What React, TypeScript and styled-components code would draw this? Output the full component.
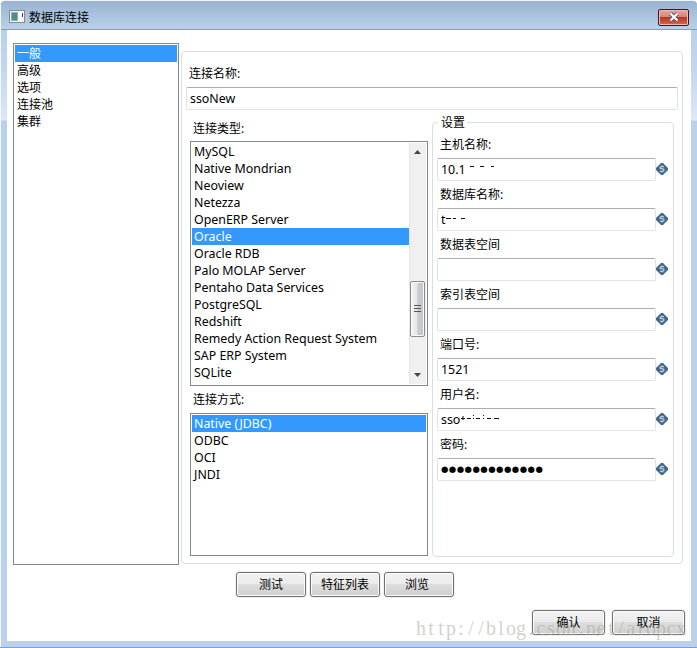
import React from "react";
import styled, { createGlobalStyle, css } from "styled-components";

const Global = createGlobalStyle`
  html, body { margin: 0; padding: 0; background: #fff; overflow: hidden; }
  *, *::before, *::after { box-sizing: border-box; }
  body, button, input {
    font-family: "Noto Sans", "Noto Sans CJK SC", sans-serif;
    font-size: 12px;
    color: #000;
  }
`;

const Window = styled.div`
  position: relative;
  width: 697px;
  height: 648px;
  padding: 0 6px 6px 7px;
  display: flex;
  flex-direction: column;
  background: linear-gradient(#99b4d1 0, #b9d1ea 30px, #c3d7ee 70px, #dce9f7 119px, #b9d1ea 120px);
  border-top: 1px solid #eef3f8;
  border-bottom: 1px solid #2cc8e0;
  border-radius: 5px 5px 0 0;
  box-shadow: inset 1px 0 #f4f8fc;
`;

const TitleBar = styled.header`
  height: 29px;
  flex: none;
  margin: 0 -6px 0 -6px;
  padding: 0 8px 0 8px;
  display: flex;
  align-items: center;
  background: linear-gradient(#99b4d1, #b9d1ea);
  border-bottom: 1px solid #9199a6;
  border-radius: 4px 4px 0 0;
`;

const Title = styled.h1`
  margin: 6px auto 0 4px;
  font: inherit;
  line-height: 18px;
`;

const AppIcon = styled.svg`
  width: 16px;
  height: 14px;
  margin-top: 4px;
`;

const CloseButton = styled.button`
  width: 31px;
  height: 17px;
  margin-top: 4px;
  padding: 0;
  display: grid;
  place-items: center;
  border: 1px solid #431422;
  border-radius: 2px;
  background: linear-gradient(#e6a79d 0, #d98578 45%, #b93621 50%, #d46a57 100%);
  box-shadow: inset 0 0 0 1px #f0b8ae;
`;

const Content = styled.main`
  flex: 1;
  min-height: 0;
  padding: 13px 6px 0;
  display: flex;
  flex-direction: column;
  background: #fff;
`;

const Columns = styled.div`
  display: flex;
  height: 522px;
  flex: none;
`;

const listFrame = css`
  border: 1px solid #828790;
  background: #fff;
  padding: 1px;
`;

const Categories = styled.ul`
  ${listFrame}
  width: 166px;
  height: 522px;
  margin: 0 2px 0 0;
  list-style: none;
`;

const Row = styled.li<{ $selected?: boolean }>`
  height: 17px;
  padding-left: 2px;
  line-height: 18px;
  overflow: hidden;
  white-space: nowrap;
  color: ${(p) => (p.$selected ? "#fff" : "#000")};
  background: ${(p) => (p.$selected ? "#3399ff" : "transparent")};
`;

const Panel = styled.section`
  width: 502px;
  height: 513px;
  margin-top: 8px;
  padding: 13px 4px 0 4px;
  border: 1px solid #d5dfe5;
  border-radius: 4px;
`;

const Label = styled.label`
  display: block;
  height: 18px;
  line-height: 18px;
  padding-left: 3px;
  white-space: nowrap;
`;

const Input = styled.input`
  display: block;
  width: 100%;
  height: 23px;
  padding: 0 3px 1px;
  border: 1px solid #e2e3ea;
  border-top-color: #abadb3;
  border-radius: 2px;
  background: #fff;
  font-size: 12.4px;
  outline: none;
`;

const NameInput = styled(Input)`
  margin-top: 4px;
`;

const Split = styled.div`
  display: flex;
  justify-content: space-between;
  padding: 9px 4px 0;
`;

const TypeColumn = styled.div`
  width: 238px;
  display: flex;
  flex-direction: column;
`;

const ListLabel = styled(Label)<{ $above: number; $below: number }>`
  flex: none;
  margin: ${(p) => p.$above}px 0 ${(p) => p.$below}px;
`;

const ListBox = styled.div<{ $height: number }>`
  ${listFrame}
  height: ${(p) => p.$height}px;
  flex: none;
  display: flex;
  overflow: hidden;
`;

const Rows = styled.ul`
  flex: 1;
  margin: 0;
  padding: 0;
  list-style: none;
  font-size: 12.4px;
`;

const ScrollBar = styled.div`
  width: 17px;
  padding: 7px 1px 7px 0;
  display: flex;
  flex-direction: column;
  align-items: center;
  background: #f0f0f0;
  border-left: 1px solid #e6e6e6;
`;

const Arrow = styled.svg`
  width: 7px;
  height: 4px;
  flex: none;
`;

const Thumb = styled.div`
  width: 15px;
  height: 56px;
  flex: none;
  margin: 127px 0 auto;
  display: grid;
  place-items: center;
  border: 1px solid #8b8b8b;
  border-radius: 2px;
  background: linear-gradient(90deg, #f5f5f5, #e5e5e8 45%, #c9cacd 55%, #c5c5c9);
  box-shadow: inset 0 0 0 1px #fafafa;
`;

const Settings = styled.fieldset`
  width: 242px;
  height: 444px;
  margin: -6px 0 0;
  min-width: 0;
  padding: 1px 2px 0 4px;
  border: 1px solid #d5dfe5;
  border-radius: 4px;
`;

const Legend = styled.legend`
  height: 18px;
  margin-left: 1px;
  padding: 0 2px 0 3px;
  line-height: 19px;
`;

const Field = styled.div`
  height: 50px;
  padding-top: 4px;
`;

const FieldLine = styled.div`
  margin-top: 4px;
  display: flex;
  align-items: flex-start;
`;

const FieldInput = styled(Input)`
  width: 219px;
`;

const Overlay = styled.div`
  position: relative;
`;

const Remnant = styled.svg`
  position: absolute;
  left: 4px;
  top: 4px;
  width: 80px;
  height: 16px;
`;

const VarIcon = styled.svg`
  width: 12px;
  height: 12px;
  margin-top: 5px;
  flex: none;
`;

const ButtonRow = styled.div<{ $gap: number; $top: number; $end?: boolean }>`
  display: flex;
  gap: ${(p) => p.$gap}px;
  margin-top: ${(p) => p.$top}px;
  ${(p) => (p.$end ? "justify-content: flex-end;" : "padding-left: 223px;")}
`;

const Button = styled.button<{ $w: number; $padRight?: number }>`
  width: ${(p) => p.$w}px;
  height: 25px;
  padding: 0 ${(p) => p.$padRight ?? 0}px 0 0;
  line-height: 20px;
  border: 1px solid #707070;
  border-radius: 3px;
  background: linear-gradient(#f2f2f2 0, #ebebeb 48%, #dddddd 50%, #cfcfcf 100%);
  box-shadow: inset 0 0 0 1px #fbfbfb, 0 0 0 1px #f0f0f0;
`;

const Watermark = styled.div`
  position: absolute;
  left: 416px;
  top: 615px;
  display: flex;
  pointer-events: none;
  font: 20px/24px "Liberation Serif", serif;
  color: rgba(165, 165, 150, 0.5);
`;

const Glyph = styled.span`
  width: 10px;
  display: flex;
  justify-content: center;
`;

const categories = ["一般", "高级", "选项", "连接池", "集群"];
const types = [
  "MySQL", "Native Mondrian", "Neoview", "Netezza", "OpenERP Server", "Oracle", "Oracle RDB",
  "Palo MOLAP Server", "Pentaho Data Services", "PostgreSQL", "Redshift",
  "Remedy Action Request System", "SAP ERP System", "SQLite",
];
const methods = ["Native (JDBC)", "ODBC", "OCI", "JNDI"];

type FieldSpec = { label: string; value: string; remnant?: string; secret?: boolean };
const fields: FieldSpec[] = [
  { label: "主机名称:", value: "10.1", remnant: "M29 4.5h4M39 4.5h4M50 4.5h3" },
  { label: "数据库名称:", value: "t", remnant: "M5 6.5h5M12 6.5h3M20 6.5h4" },
  { label: "数据表空间", value: "" },
  { label: "索引表空间", value: "" },
  { label: "端口号:", value: "1521" },
  { label: "用户名:", value: "sso", remnant: "M20 6.5h4M22 4v4M26 6.5h4M32 6.5h1M32 3.5h1M35 6.5h4M42 6.5h1M42 3.5h1M46 6.5h4M53 6.5h5" },
  { label: "密码:", value: "●●●●●●●●●●●●●", secret: true },
];

const SecretInput = styled(FieldInput)`
  font-family: "DejaVu Sans", sans-serif;
  font-size: 8.5px;
  letter-spacing: 0.45px;
`;

function Variable() {
  return (
    <VarIcon viewBox="0 0 12 12">
      <path d="M5 0h2l2.2 2.3L12 5v2L9.2 9.7 7 12H5L2.8 9.7 0 7V5l2.8-2.7Z" fill="#42698a" />
      <path d="M8 3.7H5.2Q4 3.7 4 4.7T5.2 5.8H6.8Q8 5.8 8 7T6.8 8.2H4M6 2.4v1.3M6 8.2v1.3" fill="none" stroke="#d5e1ea" strokeWidth="1.1" />
    </VarIcon>
  );
}

export default function App() {
  return (
    <>
      <Global />
      <Window>
        <TitleBar>
          <AppIcon viewBox="0 0 16 14">
            <rect x=".5" y=".5" width="15" height="12" fill="#f4f4f4" stroke="#858b90" />
            <rect x="2" y="2" width="7" height="9" fill="#8fb0c4" />
            <rect x="3" y="3" width="5" height="7" fill="#4c9188" />
            <rect x="10" y="2" width="4" height="9" fill="#fff" />
            <path d="M13.5 3v4" stroke="#335" />
          </AppIcon>
          <Title>数据库连接</Title>
          <CloseButton aria-label="关闭">
            <svg width="12" height="10" viewBox="0 0 12 10">
              <path d="M2.5 1.5 9.5 8.5M9.5 1.5 2.5 8.5" stroke="#535666" strokeWidth="4" />
              <path d="M2.5 1.5 9.5 8.5M9.5 1.5 2.5 8.5" stroke="#fff" strokeWidth="2.2" />
            </svg>
          </CloseButton>
        </TitleBar>
        <Content>
          <Columns>
            <Categories>
              {categories.map((c, i) => <Row key={c} $selected={i === 0}>{c}</Row>)}
            </Categories>
            <Panel>
              <Label>连接名称:</Label>
              <NameInput defaultValue="ssoNew" />
              <Split>
                <TypeColumn>
                  <ListLabel $above={1} $below={3}>连接类型:</ListLabel>
                  <ListBox $height={245}>
                    <Rows>
                      {types.map((t) => <Row key={t} $selected={t === "Oracle"}>{t}</Row>)}
                    </Rows>
                    <ScrollBar>
                      <Arrow viewBox="0 0 7 4"><path d="M0 4 3.5 0 7 4Z" fill="#444" /></Arrow>
                      <Thumb>
                        <svg width="7" height="8"><path d="M0 .5h7M0 3.5h7M0 6.5h7" stroke="#555" /></svg>
                      </Thumb>
                      <Arrow viewBox="0 0 7 4"><path d="M0 0h7L3.5 4Z" fill="#444" /></Arrow>
                    </ScrollBar>
                  </ListBox>
                  <ListLabel $above={5} $below={4}>连接方式:</ListLabel>
                  <ListBox $height={143}>
                    <Rows>
                      {methods.map((m, i) => <Row key={m} $selected={i === 0}>{m}</Row>)}
                    </Rows>
                  </ListBox>
                </TypeColumn>
                <Settings>
                  <Legend>设置</Legend>
                  {fields.map((f) => (
                    <Field key={f.label}>
                      <Label>{f.label}</Label>
                      <FieldLine>
                        <Overlay>
                          {f.secret ? <SecretInput defaultValue={f.value} /> : <FieldInput defaultValue={f.value} />}
                          {f.remnant && (
                            <Remnant viewBox="0 0 80 16"><path d={f.remnant} stroke="#111" fill="none" /></Remnant>
                          )}
                        </Overlay>
                        <Variable />
                      </FieldLine>
                    </Field>
                  ))}
                </Settings>
              </Split>
            </Panel>
          </Columns>
          <ButtonRow $gap={4} $top={7}>
            <Button $w={70}>测试</Button>
            <Button $w={70}>特征列表</Button>
            <Button $w={70} $padRight={4}>浏览</Button>
          </ButtonRow>
          <ButtonRow $gap={7} $top={13} $end>
            <Button $w={73}>确认</Button>
            <Button $w={73}>取消</Button>
          </ButtonRow>
        </Content>
        <Watermark>
          {"http://blog.csdn.net/aropcx".split("").map((c, i) => <Glyph key={i}>{c}</Glyph>)}
        </Watermark>
      </Window>
    </>
  );
}
